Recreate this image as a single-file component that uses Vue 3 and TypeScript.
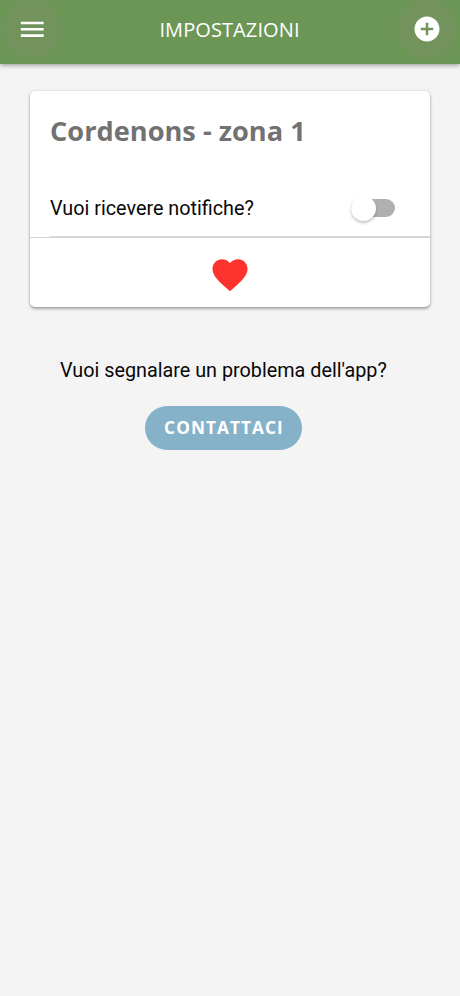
<script setup lang="ts">
import { ref } from 'vue'

const title = 'IMPOSTAZIONI'
const zone = 'Cordenons - zona 1'
const notifications = ref(false)
</script>

<template>
  <div class="page">
    <header class="toolbar">
      <button class="icon-button menu" aria-label="Menu">
        <svg width="30.500" height="30.500" viewBox="0 0 24 24"><path fill="#fff" d="M3 18h18v-2H3v2zm0-5h18v-2H3v2zm0-7v2h18V6H3z" /></svg>
      </button>
      <h1>{{ title }}</h1>
      <button class="icon-button add" aria-label="Aggiungi">
        <svg width="30" height="30" viewBox="0 0 24 24"><path fill="#fff" d="M12 2C6.48 2 2 6.48 2 12s4.480 10 10 10 10-4.480 10-10S17.520 2 12 2zm5 11h-4v4h-2v-4H7v-2h4V7h2v4h4v2z" /></svg>
      </button>
    </header>
    <main>
      <section class="card">
        <h2>{{ zone }}</h2>
        <div class="row">
          <span>Vuoi ricevere notifiche?</span>
          <button class="toggle" :class="{ on: notifications }" role="switch" :aria-checked="notifications" @click="notifications = !notifications">
            <span class="knob"></span>
          </button>
        </div>
        <div class="favorite">
          <svg width="42" height="42" viewBox="0 0 24 24"><path fill="#ff332d" d="M12 21.350l-1.450-1.320C5.400 15.360 2 12.280 2 8.500 2 5.420 4.420 3 7.500 3c1.740 0 3.410.810 4.500 2.090C13.090 3.810 14.760 3 16.500 3 19.580 3 22 5.420 22 8.500c0 3.780-3.400 6.860-8.550 11.540L12 21.350z" /></svg>
        </div>
      </section>
      <p class="question">Vuoi segnalare un problema dell'app?</p>
      <button class="contact">CONTATTACI</button>
    </main>
  </div>
</template>

<style>
body { margin: 0; background: #f4f4f4; }
</style>

<style scoped>
* { box-sizing: border-box; }
.page { min-height: 996px; background: #f4f4f4; font-family: Roboto, sans-serif; color: #080808; }
button { border: 0; padding: 0; background: none; }
.toolbar { height: 64px; display: flex; align-items: center; justify-content: space-between; padding: 0 1px 6px 0; background: #6b9656; box-shadow: 0 1px 5px rgba(0, 0, 0, .42); overflow: hidden; }
h1 { margin: 0; padding-top: 1px; font: 400 20px/28px "Open Sans", sans-serif; letter-spacing: .1px; color: #fff; }
.icon-button { width: 64px; height: 64px; flex: none; display: flex; align-items: center; justify-content: center; border-radius: 50%; background: radial-gradient(circle closest-side, #73935c 88%, transparent 96%); }
.icon-button svg { display: block; }
main { padding: 27px 30px 0; }
.card { height: 216px; background: #fff; border-radius: 5px; box-shadow: 0 2px 3px rgba(0, 0, 0, .3), 0 0 3px rgba(0, 0, 0, .16); }
h2 { margin: 0; height: 89px; padding: 22px 20px 0; font: 700 27.200px/36px "Open Sans", sans-serif; color: #727272; }
.row { height: 57px; margin-left: 20px; padding-right: 35px; display: flex; align-items: center; justify-content: space-between; border-bottom: 1px solid #d8d8d8; font-size: 19.800px; }
.toggle { width: 44px; height: 18px; display: flex; align-items: center; border-radius: 9px; background: #b0b0b0; }
.knob { width: 25px; height: 25px; flex: none; border-radius: 50%; background: #fff; box-shadow: 0 2px 3px rgba(0, 0, 0, .24); }
.on .knob { margin-left: 19px; }
.favorite { height: 70px; padding-top: 5px; display: flex; align-items: center; justify-content: center; border-top: 1px solid #d4d4d4; }
.question { margin: 50px 0 0 30px; font-size: 19.800px; line-height: 28px; }
.contact { display: block; width: 157px; height: 44px; margin: 21px 0 0 115px; padding-left: 1px; border-radius: 22px; background: #85b1c9; color: #fff; font: 700 17.200px/44px "Open Sans", sans-serif; letter-spacing: 1.100px; }
</style>
